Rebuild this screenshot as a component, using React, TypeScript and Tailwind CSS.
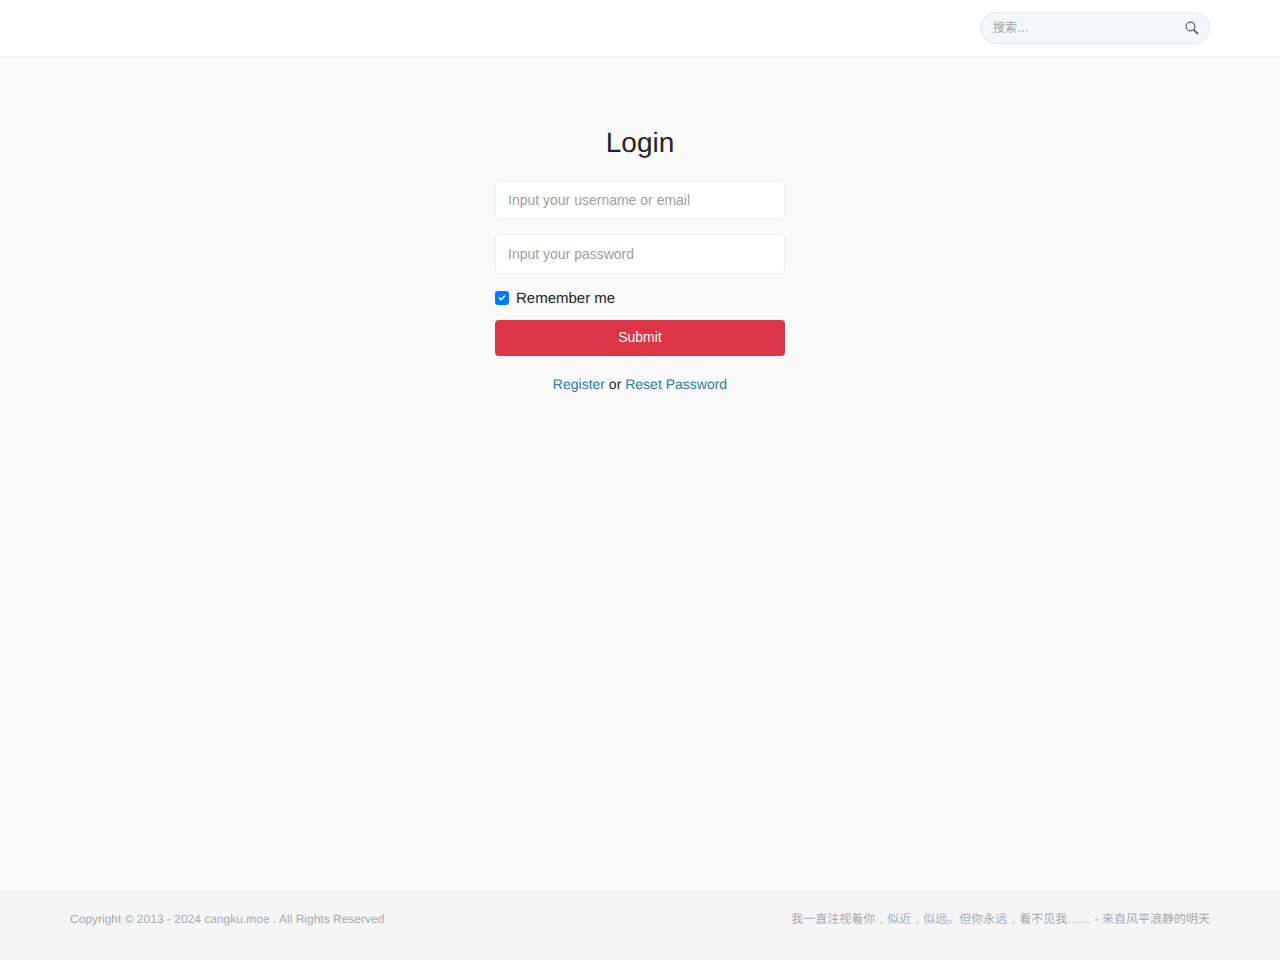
import { Check } from 'lucide-react';

function Header() {
  return (
    <header className="h-[57px] bg-white border-b border-[#eeeeee] flex items-center justify-end pr-[70px] pb-px">
      <div className="relative w-[230px] h-8">
        <input
          type="text"
          placeholder="搜索…"
          className="w-full h-full rounded-full border border-[#e3e8ea] bg-[#f4f7fa] pl-3 pr-8 pt-px text-xs text-[#495057] placeholder:text-[#a0a0a0] outline-none"
        />
        {/* Search icon */}
        <svg viewBox="0 0 14 14" fill="none" className="absolute right-[11px] top-[9px] w-[14px] h-[14px] text-[#555b60]">
          <circle cx="5.5" cy="5.5" r="4.4" stroke="currentColor" strokeWidth="1.1" />
          <path d="M8.8 8.8L12.6 12.6" stroke="currentColor" strokeWidth="1.7" strokeLinecap="round" />
        </svg>
      </div>
    </header>
  );
}

function Comma() {
  // the comma sits in the middle of a full-width cell in the picture
  return <span className="inline-block w-3 text-center">,</span>;
}

function LoginForm() {
  return (
    <form className="w-[290px] mx-auto flex flex-col">
      <h1 className="text-[28px] leading-[34px] text-[#212529] text-center mb-5">Login</h1>

      <input
        type="text"
        placeholder="Input your username or email"
        className="h-10 px-3 bg-white border border-[#e9ecef] rounded text-sm text-[#495057] placeholder:text-[#a0a0a0] outline-none mb-3.5"
      />
      <input
        type="password"
        placeholder="Input your password"
        className="h-10 px-3 bg-white border border-[#e9ecef] rounded text-sm text-[#495057] placeholder:text-[#a0a0a0] outline-none mb-[14px]"
      />

      {/* Remember me */}
      <label className="flex items-center gap-[7px] h-[22px] mb-[10px] text-[15px] text-[#212529]">
        <span className="w-[14px] h-[14px] mb-0.5 rounded-[3px] bg-[#007bff] flex items-center justify-center">
          <Check className="w-2 h-2 text-white" strokeWidth={4.5} />
        </span>
        Remember me
      </label>

      <button type="button" className="h-9 bg-[#dc3545] rounded text-sm leading-[34px] pb-0.5 text-[#f8f9fa] mb-[18px]">
        Submit
      </button>

      <p className="text-sm leading-[20px] text-center text-[#212529]">
        <a href="#" className="text-[#2f7ba6]">Register</a> or{' '}
        <a href="#" className="text-[#2f7ba6]">Reset Password</a>
      </p>
    </form>
  );
}

function Footer() {
  return (
    <footer className="h-[70px] bg-[#f5f5f5] flex items-center justify-between px-[70px] pb-3 text-xs text-[#a6aaae]">
      <span>Copyright © 2013 - 2024 cangku.moe . All Rights Reserved</span>
      <span>
        我一直注视着你<Comma />似近<Comma />似远。但你永远<Comma />看不见我…… - 来自风平浪静的明天
      </span>
    </footer>
  );
}

export default function App() {
  return (
    <div className="min-h-screen flex flex-col bg-[#f9f9f9] [text-rendering:geometricPrecision] font-['Liberation_Sans','Noto_Sans_CJK_SC',sans-serif]">
      <Header />
      <main className="flex-1 pt-[69px]">
        <LoginForm />
      </main>
      <Footer />
    </div>
  );
}
